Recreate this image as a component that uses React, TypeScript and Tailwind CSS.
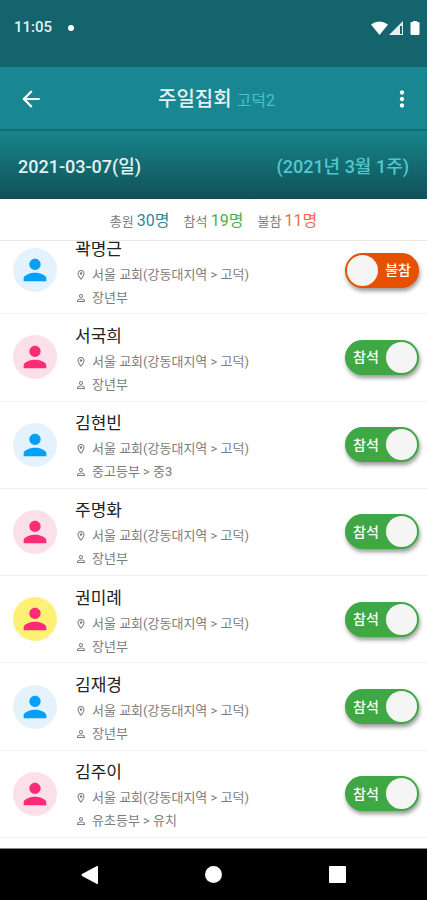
import { useState } from "react"
import { MdArrowBack, MdMoreVert, MdOutlineLocationOn, MdPerson, MdPersonOutline } from "react-icons/md"

type Member = {
    name: string
    group: string
    avatar: string
    attended: boolean
}

const blue = "bg-[#e3f2fd] text-[#03a0f8]"
const pink = "bg-[#fce0e9] text-[#ff2b78]"
const yellow = "bg-[#fff176] text-[#ff2b78]"

const initialMembers: Member[] = [
    { name: "곽명근", group: "장년부", avatar: blue, attended: false },
    { name: "서국희", group: "장년부", avatar: pink, attended: true },
    { name: "김현빈", group: "중고등부 > 중3", avatar: blue, attended: true },
    { name: "주명화", group: "장년부", avatar: pink, attended: true },
    { name: "권미례", group: "장년부", avatar: yellow, attended: true },
    { name: "김재경", group: "장년부", avatar: blue, attended: true },
    { name: "김주이", group: "유초등부 > 유치", avatar: pink, attended: true },
]

function StatusBar() {
    return (
        <div className="flex h-[67px] items-center justify-between bg-[#13646c] pr-[6px] pb-3 pl-[14px] text-[#e3f1f2]">
            <div className="flex items-center gap-4">
                <span className="text-[15px] font-medium">11:05</span>
                <span className="h-[6px] w-[6px] rounded-full bg-white" />
            </div>
            <svg className="h-4 w-[50px] fill-white" viewBox="0 0 50 16">
                <path d="M0 4.500Q8.500 -1.500 17 4.500L8.500 15Z" />
                <path d="M32 1V15H18Z" opacity=".9" />
                <path d="M29 6H31V14H29Z" fill="#13646c" />
                <path d="M42 1h4v1h1.500q1 0 1 1v11q0 1 -1 1h-7q-1 0 -1 -1v-11q0 -1 1 -1h1.500z" />
            </svg>
        </div>
    )
}

function Toggle({ member, onChange }: { member: Member; onChange: () => void }) {
    return (
        <label className="relative shrink-0 cursor-pointer">
            <input
                type="checkbox"
                role="switch"
                aria-label={member.name}
                className="peer sr-only"
                checked={member.attended}
                onChange={onChange}
            />
            <span className="flex h-[35px] w-[74px] flex-row-reverse items-center justify-between rounded-full bg-[#e65100] px-[2px] text-white shadow-[1px_3px_4px_rgba(0,0,0,0.4)] peer-checked:flex-row peer-checked:bg-[#3fa845]">
                <span className="px-[6px] text-sm font-medium">{member.attended ? "참석" : "불참"}</span>
                <span className="h-[31px] w-[31px] rounded-full bg-[#f5f5f5]" />
            </span>
        </label>
    )
}

function MemberRow({ member, onChange }: { member: Member; onChange: () => void }) {
    return (
        <li className="flex flex-1 items-center border-b border-[#f0f0f0] pr-2 pl-[13px]">
            <div className={"flex h-11 w-11 shrink-0 items-center justify-center rounded-full " + member.avatar}>
                <MdPerson className="h-[34px] w-[34px]" />
            </div>
            <div className="ml-[18px] flex-1 pt-[5px]">
                <h2 className="text-[17px] leading-6 text-[#222222]">{member.name}</h2>
                <p className="mt-[2px] flex items-center gap-[5px] text-[13px] leading-6 text-[#7c7c7c]">
                    <MdOutlineLocationOn className="h-3 w-3" />
                    서울 교회(강동대지역 &gt; 고덕)
                </p>
                <p className="flex items-center gap-[5px] text-[13px] leading-[22px] text-[#7c7c7c]">
                    <MdPersonOutline className="h-3 w-3" />
                    {member.group}
                </p>
            </div>
            <Toggle member={member} onChange={onChange} />
        </li>
    )
}

export default function App() {
    const [members, setMembers] = useState(initialMembers)

    const toggle = (name: string) => {
        setMembers(members.map((m) => (m.name === name ? { ...m, attended: !m.attended } : m)))
    }

    return (
        <div className="flex min-h-screen flex-col bg-white font-['Roboto','Noto_Sans_CJK_KR',sans-serif]">
            <StatusBar />
            <header className="flex h-[62px] items-center justify-between bg-[#188791] pt-[2px] pr-3 pl-[18px] text-white">
                <button type="button" aria-label="뒤로">
                    <MdArrowBack className="h-[26px] w-[26px]" />
                </button>
                <h1 className="text-xl font-medium text-[#e3f1f2]">
                    주일집회 <span className="text-base font-normal text-[#43c3ca]">고덕2</span>
                </h1>
                <button type="button" aria-label="메뉴">
                    <MdMoreVert className="h-[26px] w-[26px]" />
                </button>
            </header>
            <div className="flex h-[70px] items-center justify-between border-t-2 border-[#126d76] bg-linear-to-b from-[#17858c] to-[#115158] px-[18px] pt-1 text-lg font-medium">
                <span className="text-[#e3f1f2]">2021-03-07(일)</span>
                <span className="text-[#4fc9cf]">(2021년 3월 1주)</span>
            </div>
            <div className="flex h-[42px] items-center justify-center gap-[14px] border-b border-[#e8e8e8] pt-[3px] text-[13px] text-[#7c7c7c]">
                <span>총원 <span className="text-base text-[#2b8a94]">30명</span></span>
                <span>참석 <span className="text-base text-[#4caf50]">19명</span></span>
                <span>불참 <span className="text-base text-[#f0694a]">11명</span></span>
            </div>
            <main className="flex flex-1 flex-col overflow-hidden pb-[10px]">
                <ul className="-mt-[14px] flex flex-1 flex-col">
                    {members.map((m) => (
                        <MemberRow key={m.name} member={m} onChange={() => toggle(m.name)} />
                    ))}
                </ul>
            </main>
            <nav className="flex h-[52px] items-center justify-around border-t border-[#888888] bg-black px-7">
                <button type="button" aria-label="이전">
                    <svg className="h-5 w-[18px] fill-white" viewBox="0 0 18 20">
                        <path d="M16 1Q17 .5 17 2V18Q17 19.500 16 19L1 11Q0 10 1 9Z" />
                    </svg>
                </button>
                <button type="button" aria-label="홈" className="h-[17px] w-[17px] rounded-full bg-white" />
                <button type="button" aria-label="최근 앱" className="h-[17px] w-[17px] rounded-[1px] bg-white" />
            </nav>
        </div>
    )
}
